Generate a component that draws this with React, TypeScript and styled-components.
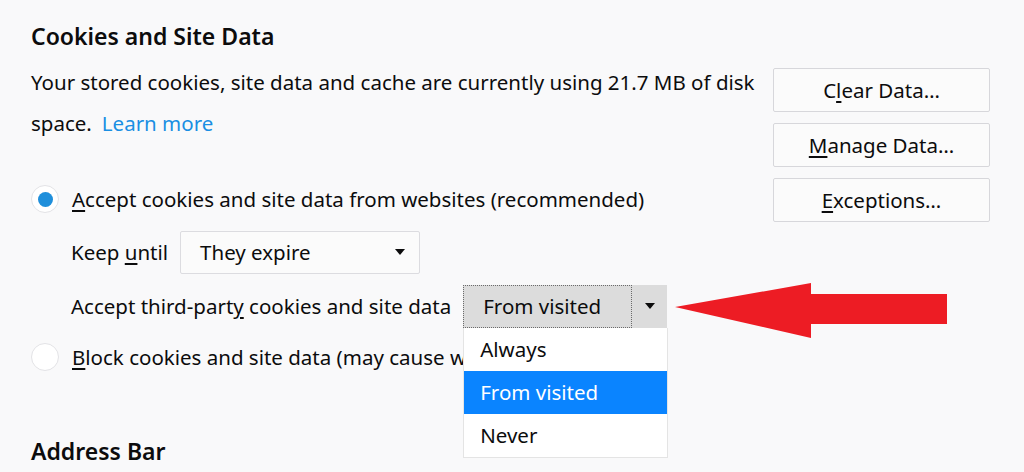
import React from 'react'
import styled, { createGlobalStyle } from 'styled-components';

const GlobalStyle = createGlobalStyle`
  body {
    margin: 0;
    background: #f9f9fa;
    color: #0c0c0d;
    font-family: "Noto Sans", "Open Sans", sans-serif;
  }
`;

const Page = styled.div`
  width: 1024px;
  height: 472px;
  overflow: hidden;
  box-sizing: border-box;
  padding: 16px 0 0 31px;
`;

const Heading = styled.h2`
  margin: 0;
  font-size: 23px;
  font-weight: 600;
  line-height: 40px;
`;

const Section = styled.div`
  display: flex;
  margin-top: 6px;
`;

const LeftCol = styled.div`
  width: 730px;
  font-size: 20.5px;
`;

const Description = styled.p`
  margin: 0;
  line-height: 41px;
`;

const Link = styled.a`
  color: #1a8fe3;
  margin-left: 10px;
  text-decoration: none;
`;

const ButtonCol = styled.div`
  display: flex;
  flex-direction: column;
  gap: 11px;
  margin-left: 12px;
  padding-top: 6px;
`;

const Button = styled.button`
  width: 217px;
  height: 44px;
  background: #fbfbfb;
  border: 1px solid #d7d7db;
  border-radius: 2px;
  font-family: inherit;
  font-size: 20.5px;
  color: #0c0c0d;
`;

const U = styled.span`
  text-decoration: underline;
  text-underline-offset: 3px;
`;

const Row = styled.div<{ $top: number; $indent?: boolean }>`
  display: flex;
  align-items: center;
  height: 44px;
  margin-top: ${p => p.$top}px;
  padding-left: ${p => (p.$indent ? 40 : 0)}px;
  gap: 12px;
  white-space: nowrap;
`;

const Radio = styled.span<{ $checked?: boolean }>`
  width: 28px;
  height: 28px;
  box-sizing: border-box;
  border-radius: 50%;
  background: #fff;
  border: 1px solid #e3e3e6;
  display: flex;
  align-items: center;
  justify-content: center;
  margin-right: 1px;
  flex-shrink: 0;
  &::after {
    content: '';
    display: ${p => (p.$checked ? 'block' : 'none')};
    width: 15px;
    height: 15px;
    border-radius: 50%;
    background: #1f8fdb;
  }
`;

const Caret = styled.span`
  width: 0;
  height: 0;
  border-left: 5px solid transparent;
  border-right: 5px solid transparent;
  border-top: 6px solid #0c0c0d;
`;

const SelectBox = styled.div`
  width: 240px;
  height: 43px;
  box-sizing: border-box;
  border: 1px solid #dcdce0;
  border-radius: 2px;
  background: #fbfbfb;
  display: flex;
  align-items: center;
  justify-content: space-between;
  padding: 0 14px 0 19px;
`;

const OpenSelect = styled.div`
  position: relative;
  width: 204px;
  height: 43px;
  display: flex;
  background: #dcdcdc;
`;

const SelectValue = styled.div`
  width: 169px;
  box-sizing: border-box;
  border: 1px dotted #6b6b6b;
  padding-left: 19px;
  display: flex;
  align-items: center;
`;

const SelectArrow = styled.div`
  flex: 1;
  display: flex;
  align-items: center;
  justify-content: center;
`;

const Menu = styled.ul`
  position: absolute;
  top: 100%;
  left: 0;
  z-index: 2;
  width: 205px;
  margin: 0;
  padding: 0;
  list-style: none;
  background: #fff;
  border: 1px solid #e4e4e4;
  border-top: none;
  box-sizing: border-box;
`;

const Option = styled.li<{ $active?: boolean }>`
  height: 43px;
  display: flex;
  align-items: center;
  padding-left: 16px;
  background: ${p => (p.$active ? '#0a84ff' : 'transparent')};
  color: ${p => (p.$active ? '#fff' : '#0c0c0d')};
`;

const Pointer = styled.svg`
  position: absolute;
  left: calc(100% + 8px);
  top: -3px;
`;

const SubHeading = styled(Heading)`
  margin-top: 52px;
`;

const App = () => {
  return (
    <Page>
      <GlobalStyle />
      <Heading>Cookies and Site Data</Heading>
      <Section>
        <LeftCol>
          <Description>
            Your stored cookies, site data and cache are currently using 21.7 MB of disk space.
            <Link href="#">Learn more</Link>
          </Description>

          <Row $top={33}>
            <Radio $checked />
            <span>
              <U>A</U>ccept cookies and site data from websites (recommended)
            </span>
          </Row>

          <Row $top={9} $indent>
            <span>
              Keep <U>u</U>ntil
            </span>
            <SelectBox>
              <span>They expire</span>
              <Caret />
            </SelectBox>
          </Row>

          <Row $top={10} $indent>
            <span>
              Accept third-part<U>y</U> cookies and site data
            </span>
            <OpenSelect>
              <SelectValue>From visited</SelectValue>
              <SelectArrow>
                <Caret />
              </SelectArrow>
              <Menu>
                <Option>Always</Option>
                <Option $active>From visited</Option>
                <Option>Never</Option>
              </Menu>
              <Pointer width="275" height="57" viewBox="0 0 275 57">
                <polygon
                  points="0,25 136,1 136,12 272,12 272,42 136,42 136,56"
                  fill="#ed1c24"
                />
              </Pointer>
            </OpenSelect>
          </Row>

          <Row $top={7}>
            <Radio />
            <span>
              <U>B</U>lock cookies and site data (may cause websites to break)
            </span>
          </Row>
        </LeftCol>

        <ButtonCol>
          <Button>
            C<U>l</U>ear Data…
          </Button>
          <Button>
            <U>M</U>anage Data…
          </Button>
          <Button>
            <U>E</U>xceptions…
          </Button>
        </ButtonCol>
      </Section>
      <SubHeading>Address Bar</SubHeading>
    </Page>
  )
}

export default App;
